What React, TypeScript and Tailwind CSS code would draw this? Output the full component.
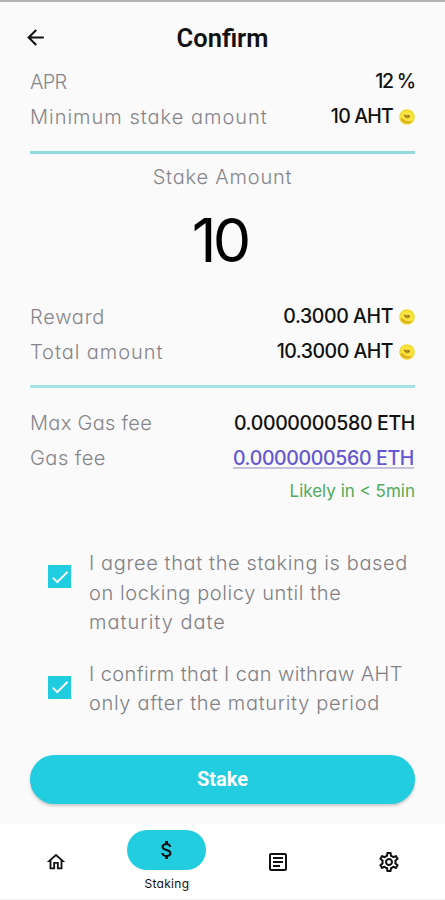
import type { ReactNode } from "react";
import { clsx } from "clsx";
import {
    MdArrowBack,
    MdAttachMoney,
    MdCheck,
    MdOutlineArticle,
    MdOutlineHome,
    MdOutlineSettings,
} from "react-icons/md";

function Coin() {
    return (
        <svg viewBox="0 0 16 16" className="ml-[6px] h-4 w-4 shrink-0">
            <circle cx="8" cy="8" r="7.8" fill="#f0dc30" />
            <circle cx="8" cy="8" r="6" fill="#f8e63c" />
            <path d="M1.500 10c1.500 4 6.500 5.500 9.500 4l2.500-2.500c-4 1.600-8 1-10-2.500z" fill="#dfae22" />
            <path d="M4.500 5l2.300 1.500 1.700-1 2.800 1-1 2.300-2.600.6-2-1.400z" fill="#c0922a" />
            <path d="M5.500 6.200l1.800 1.400M8.800 7.300l1.500-.2" stroke="#6e4a18" strokeWidth="0.9" />
        </svg>
    );
}

interface RowProps {
    label: string;
    labelClass: string;
    children: ReactNode;
}

function Row({ label, labelClass, children }: RowProps) {
    return (
        <div className="flex h-[35px] items-center justify-between text-[20px] whitespace-nowrap">
            <span className={clsx("font-light text-[#85858b]", labelClass)}>{label}</span>
            <span className="flex items-center text-[19.5px] font-medium text-[#111]">{children}</span>
        </div>
    );
}

function Agreement({ lines, className }: { lines: { text: string; tracking: string }[]; className?: string }) {
    return (
        <label className={clsx("flex pl-[18px]", className)}>
            <span className="mt-[16px] flex h-[23px] w-[23px] shrink-0 items-center justify-center bg-[#20cde0]">
                <MdCheck className="h-[22px] w-[22px] text-white" />
            </span>
            <span className="ml-[18px] flex flex-col text-[20px] leading-[29.5px] font-light whitespace-nowrap text-[#808085]">
                {lines.map(({ text, tracking }) => (
                    <span key={text} className={tracking}>
                        {text}
                    </span>
                ))}
            </span>
        </label>
    );
}

export default function App() {
    return (
        <div className="flex h-[900px] w-[445px] flex-col overflow-hidden border-t-2 border-[#b2b2b2] bg-[#fafafa] font-['Inter',sans-serif] [font-feature-settings:'cv11']">
            <header className="grid h-[62px] shrink-0 grid-cols-[1fr_auto_1fr] items-center px-[23px]">
                <MdArrowBack className="mt-[9px] h-[25px] w-[25px] text-[#111]" />
                <h1 className="mt-[9px] font-['Roboto',sans-serif] text-[25.5px] leading-[30px] font-semibold text-[#111]">
                    Confirm
                </h1>
            </header>

            <main className="flex flex-1 flex-col px-[30px]">
                <Row label="APR" labelClass="tracking-[-0.8px]">
                    <span className="mt-px tracking-[-1.2px]">12 %</span>
                </Row>
                <Row label="Minimum stake amount" labelClass="tracking-[1px]">
                    <span className="mt-px tracking-[-0.8px]">10 AHT</span>
                    <Coin />
                </Row>

                <hr className="mt-[17px] h-[3px] border-0 bg-[#91d9dd]" />

                <p className="mt-[8px] text-center text-[20px] leading-[30px] font-light tracking-[0.8px] text-[#85858b]">
                    Stake Amount
                </p>
                <p className="mt-[13px] pr-[6px] text-center text-[61px] leading-[70px] tracking-[-4px] text-black">
                    10
                </p>

                <div className="mt-[24px]">
                    <Row label="Reward" labelClass="tracking-[0.75px]">
                        <span className="mt-px tracking-[-0.4px]">0.3000 AHT</span>
                        <Coin />
                    </Row>
                    <Row label="Total amount" labelClass="tracking-[0.95px]">
                        <span className="mt-px tracking-[-0.5px]">10.3000 AHT</span>
                        <Coin />
                    </Row>
                </div>

                <hr className="mt-[16px] h-[3px] border-0 bg-[#a6e2e4]" />

                <div className="mt-[17px]">
                    <Row label="Max Gas fee" labelClass="tracking-[0.3px]">
                        <span className="mt-[2px] tracking-[-0.35px]">0.0000000580 ETH</span>
                    </Row>
                    <Row label="Gas fee" labelClass="tracking-[0.5px]">
                        <a className="mt-[2px] mr-px border-b-2 border-[#c5c2dc] leading-[18px] tracking-[-0.35px] text-[#6456d2]">
                            0.0000000560 ETH
                        </a>
                    </Row>
                </div>
                <p className="mt-px text-right text-[17px] leading-[30px] text-[#53aa5c]">Likely in &lt; 5min</p>

                <Agreement
                    className="mt-[43px]"
                    lines={[
                        { text: "I agree that the staking is based", tracking: "tracking-[0.62px]" },
                        { text: "on locking policy until the", tracking: "tracking-[0.6px]" },
                        { text: "maturity date", tracking: "tracking-[1px]" },
                    ]}
                />
                <Agreement
                    className="mt-[22px]"
                    lines={[
                        { text: "I confirm that I can withraw AHT", tracking: "tracking-[0.4px]" },
                        { text: "only after the maturity period", tracking: "tracking-[0.67px]" },
                    ]}
                />

                <button className="mt-[36px] h-[49px] rounded-full bg-[#22cde0] font-['Roboto',sans-serif] text-[20px] font-bold text-white shadow-[0_2px_3px_rgba(0,0,0,0.2)]">
                    Stake
                </button>
            </main>

            <nav className="grid h-[76px] shrink-0 grid-cols-4 border-b border-[#eeeeee] bg-white text-[#111]">
                <div className="flex items-center justify-center">
                    <MdOutlineHome className="h-[22px] w-[22px]" />
                </div>
                <div className="flex flex-col items-center pt-[6px]">
                    <span className="flex h-10 w-[79px] items-center justify-center rounded-full bg-[#22cde0]">
                        <MdAttachMoney className="h-[24px] w-[24px]" />
                    </span>
                    <span className="mt-[6px] text-[12px] leading-[16px] tracking-[0.3px]">Staking</span>
                </div>
                <div className="flex items-center justify-center">
                    <MdOutlineArticle className="h-[24px] w-[24px]" />
                </div>
                <div className="flex items-center justify-center">
                    <MdOutlineSettings className="h-[24px] w-[24px]" />
                </div>
            </nav>
        </div>
    );
}
